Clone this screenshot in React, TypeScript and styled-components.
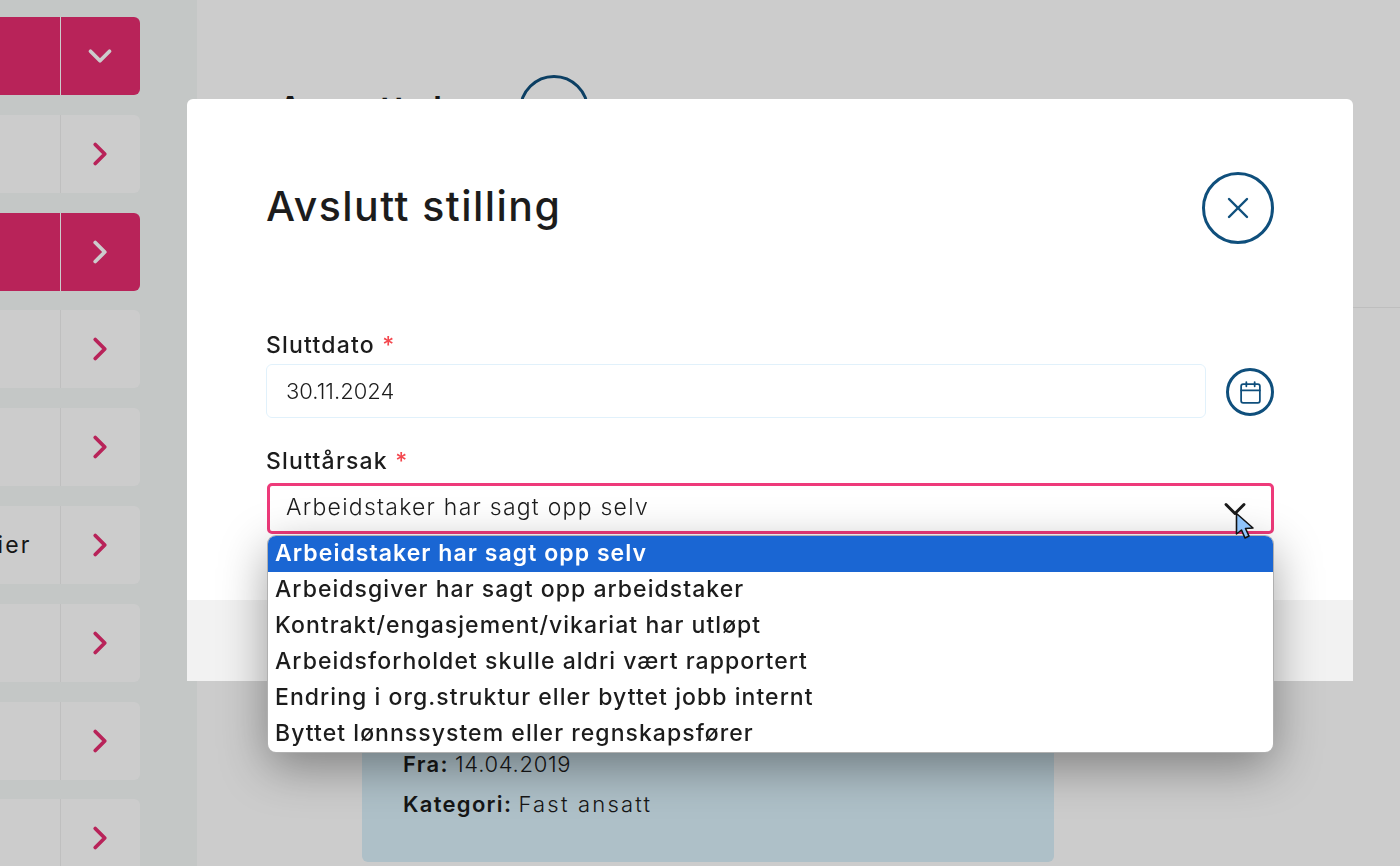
import styled, { createGlobalStyle } from 'styled-components';
import { Calendar, ChevronDown, ChevronRight, X } from 'lucide-react';

const reasons = [
  'Arbeidstaker har sagt opp selv',
  'Arbeidsgiver har sagt opp arbeidstaker',
  'Kontrakt/engasjement/vikariat har utløpt',
  'Arbeidsforholdet skulle aldri vært rapportert',
  'Endring i org.struktur eller byttet jobb internt',
  'Byttet lønnssystem eller regnskapsfører',
];

const rows = [
  { active: true, open: true },
  {},
  { active: true },
  {},
  {},
  { label: 'Kategorier' },
  {},
  {},
  {},
];

const App = () => {
  return (
    <Page>
      <GlobalStyle />
      <Sidebar>
        {rows.map((row, i) => (
          <Row key={i} $active={row.active}>
            <RowLabel>{row.label}</RowLabel>
            <RowToggle $active={row.active}>
              {row.open ? <ChevronDown size={38} strokeWidth={2.4} /> : <ChevronRight size={38} strokeWidth={2.4} />}
            </RowToggle>
          </Row>
        ))}
      </Sidebar>
      <Main>
        <MainHeader>
          <MainTitle>Ansettelse</MainTitle>
          <RoundButton $size={70} />
        </MainHeader>
        <Card>
          <CardLine>
            <b>Fra:</b> <CardValue $tracking={0.7}>14.04.2019</CardValue>
          </CardLine>
          <CardLine>
            <b>Kategori:</b> <CardValue $tracking={2.2}>Fast ansatt</CardValue>
          </CardLine>
        </Card>
      </Main>
      <Overlay>
        <Modal>
          <ModalHeader>
            <ModalTitle>Avslutt stilling</ModalTitle>
            <RoundButton $size={72}>
              <X size={36} strokeWidth={1.6} />
            </RoundButton>
          </ModalHeader>
          <ModalBody>
            <Field>
              <Label>
                Sluttdato <Required>*</Required>
              </Label>
              <DateRow>
                <DateInput>30.11.2024</DateInput>
                <RoundButton $size={48}>
                  <Calendar size={25} strokeWidth={1.7} />
                </RoundButton>
              </DateRow>
            </Field>
            <Field>
              <Label>
                Sluttårsak <Required>*</Required>
              </Label>
              <Select>
                <SelectValue>{reasons[0]}</SelectValue>
                <ChevronDown size={36} strokeWidth={2} />
                <Dropdown>
                  {reasons.map((reason, i) => (
                    <Option key={reason} $selected={i === 0}>
                      {reason}
                    </Option>
                  ))}
                </Dropdown>
                <Cursor width="22" height="28" viewBox="0 0 22 28">
                  <path
                    d="M1.5 1.5 L1.5 22 L6.5 18 L10 26 L14 24 L10.5 16.5 L18 16 Z"
                    fill="#8fc4fb"
                    stroke="#111"
                    strokeWidth="1.6"
                    strokeLinejoin="round"
                  />
                </Cursor>
              </Select>
            </Field>
          </ModalBody>
          <ModalFooter>
            <FooterAction>Avslutt stilling</FooterAction>
          </ModalFooter>
        </Modal>
      </Overlay>
    </Page>
  );
};

const GlobalStyle = createGlobalStyle`
  html,
  body {
    margin: 0;
    height: 100%;
    overflow: hidden;
  }
  body {
    font-family: 'Inter', 'Liberation Sans', sans-serif;
    color: #1c1c1c;
    background: #fff;
  }
`;

const Page = styled.div`
  width: 1400px;
  height: 866px;
  display: flex;
  overflow: hidden;
`;

const Sidebar = styled.aside`
  width: 397px;
  margin-left: -200px;
  flex-shrink: 0;
  box-sizing: border-box;
  padding-top: 17px;
  background: #f6f9f8;
  display: flex;
  flex-direction: column;
  gap: 19.8px;
`;

const Row = styled.div<{ $active?: boolean }>`
  width: 340px;
  height: 78px;
  flex-shrink: 0;
  display: flex;
  border-radius: 0 6px 6px 0;
  background: ${(p) => (p.$active ? '#e62c70' : '#fff')};
`;

const RowLabel = styled.div`
  flex: 1;
  display: flex;
  align-items: center;
  padding-left: 96px;
  font-size: 23px;
  letter-spacing: 2.2px;
  white-space: nowrap;
`;

const RowToggle = styled.div<{ $active?: boolean }>`
  width: 80px;
  box-sizing: border-box;
  padding-right: 2px;
  display: flex;
  align-items: center;
  justify-content: center;
  border-left: 1px solid ${(p) => (p.$active ? '#fff' : '#efefef')};
  color: ${(p) => (p.$active ? '#fff' : '#e62c70')};
`;

const Main = styled.main`
  flex: 1;
  display: flex;
  flex-direction: column;
`;

const MainHeader = styled.header`
  height: 308px;
  box-sizing: border-box;
  padding: 75px 0 0 79px;
  display: flex;
  align-items: flex-start;
  gap: 27px;
  border-bottom: 1px solid #eee;
`;

const MainTitle = styled.h1`
  margin: 12px 0 0;
  font-size: 40px;
  font-weight: 500;
  line-height: 48px;
  letter-spacing: 1.4px;
`;

const RoundButton = styled.div<{ $size: number }>`
  width: ${(p) => p.$size}px;
  height: ${(p) => p.$size}px;
  box-sizing: border-box;
  flex-shrink: 0;
  border: 3px solid #0f4f7c;
  border-radius: 50%;
  color: #0f4f7c;
  display: flex;
  align-items: center;
  justify-content: center;
`;

const Card = styled.section`
  width: 692px;
  height: 301px;
  margin: 253px 0 0 165px;
  box-sizing: border-box;
  padding: 190px 0 0 41px;
  background: #daf0fb;
  border-radius: 6px;
`;

const CardLine = styled.p`
  margin: 0 0 14px;
  font-size: 22px;
  line-height: 26px;
  font-weight: 300;
  b {
    font-weight: 600;
    letter-spacing: 1.3px;
  }
`;

const CardValue = styled.span<{ $tracking: number }>`
  letter-spacing: ${(p) => p.$tracking}px;
`;

const Overlay = styled.div`
  position: fixed;
  inset: 0;
  background: rgba(0, 0, 0, 0.2);
  padding: 99px 47px 0 187px;
`;

const Modal = styled.div`
  width: 1166px;
  height: 582px;
  background: #fff;
  border-radius: 6px 6px 0 0;
  display: flex;
  flex-direction: column;
`;

const ModalHeader = styled.div`
  height: 230px;
  box-sizing: border-box;
  padding: 73px 79px 0;
  display: flex;
  justify-content: space-between;
  align-items: flex-start;
`;

const ModalTitle = styled.h2`
  margin: 9px 0 0;
  font-size: 41px;
  font-weight: 500;
  line-height: 50px;
  letter-spacing: 1.45px;
`;

const ModalBody = styled.div`
  flex: 1;
  padding: 0 79px;
  display: flex;
  flex-direction: column;
  gap: 27px;
`;

const Field = styled.div`
  display: flex;
  flex-direction: column;
  gap: 3px;
`;

const Label = styled.label`
  font-size: 23px;
  line-height: 32px;
  font-weight: 500;
  letter-spacing: 1.2px;
`;

const Required = styled.span`
  color: #f4484f;
`;

const DateRow = styled.div`
  display: flex;
  align-items: center;
  gap: 20px;
  ${RoundButton} {
    margin-top: 2px;
  }
`;

const DateInput = styled.div`
  flex: 1;
  height: 54px;
  box-sizing: border-box;
  padding-left: 19px;
  display: flex;
  align-items: center;
  border: 1px solid #e1f1fb;
  border-radius: 6px;
  font-size: 22px;
  font-weight: 300;
`;

const Select = styled.div`
  position: relative;
  height: 51px;
  margin: 3px 0 0 1px;
  box-sizing: border-box;
  padding: 0 18px 0 16px;
  display: flex;
  align-items: center;
  justify-content: space-between;
  border: 3px solid #ee3a7a;
  border-radius: 5px;
  svg {
    flex-shrink: 0;
  }
`;

const SelectValue = styled.span`
  margin-top: -3px;
  font-size: 23px;
  font-weight: 300;
  letter-spacing: 1.25px;
`;

const Dropdown = styled.ul`
  position: absolute;
  top: 50px;
  left: -2px;
  right: -2px;
  z-index: 2;
  margin: 0;
  padding: 0;
  list-style: none;
  background: #fff;
  border-radius: 8px;
  overflow: hidden;
  box-shadow: 0 0 0 1px #b0b0b0, 0 14px 48px rgba(0, 0, 0, 0.38);
`;

const Option = styled.li<{ $selected?: boolean }>`
  height: 36px;
  box-sizing: border-box;
  padding: 0 0 2px 7px;
  display: flex;
  align-items: center;
  font-size: 23px;
  letter-spacing: 1.05px;
  font-weight: ${(p) => (p.$selected ? 600 : 500)};
  color: ${(p) => (p.$selected ? '#fff' : '#1c1c1c')};
  background: ${(p) => (p.$selected ? '#1a66d3' : 'transparent')};
`;

const Cursor = styled.svg`
  position: absolute;
  top: 26px;
  right: 14px;
  z-index: 3;
`;

const ModalFooter = styled.footer`
  height: 81px;
  box-sizing: border-box;
  padding-right: 78px;
  background: #f2f2f2;
  display: flex;
  align-items: center;
  justify-content: flex-end;
`;

const FooterAction = styled.span`
  font-size: 22px;
  color: #0f4f7c;
`;

export default App;
